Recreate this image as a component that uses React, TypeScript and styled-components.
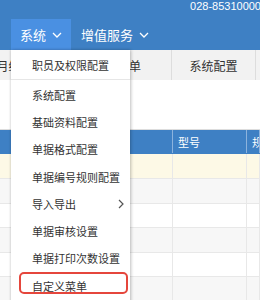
import React from "react";
import styled, { createGlobalStyle } from "styled-components";

const GlobalStyle = createGlobalStyle`
  html, body {
    margin: 0;
    padding: 0;
    width: 260px;
    height: 300px;
    overflow: hidden;
    background: #ffffff;
  }
  body {
    font-family: "Noto Sans CJK SC", "Noto Sans", sans-serif;
  }
  * { box-sizing: border-box; }
`;

const Page = styled.div`
  width: 260px;
  height: 300px;
  overflow: hidden;
  display: flex;
  flex-direction: column;
`;

const Header = styled.header`
  background: #3e80c4;
  height: 50px;
  display: flex;
  flex-direction: column;
  flex-shrink: 0;
`;

const TopStrip = styled.div`
  height: 19px;
  display: flex;
  justify-content: flex-end;
  align-items: flex-start;
  overflow: hidden;
`;

const Phone = styled.span`
  color: #ffffff;
  font-family: "Liberation Sans", Arial, sans-serif;
  font-size: 11px;
  line-height: 12px;
  white-space: nowrap;
  margin-right: -1px;
`;

const Nav = styled.nav`
  height: 31px;
  display: flex;
  align-items: stretch;
  padding-left: 11px;
  position: relative;
  z-index: 5;
`;

const NavItem = styled.div<{ $active?: boolean; $w: number; $pl: number }>`
  position: relative;
  width: ${(p) => p.$w}px;
  padding-left: ${(p) => p.$pl}px;
  display: flex;
  align-items: center;
  gap: 6px;
  color: #ffffff;
  font-size: 13px;
  white-space: nowrap;
  background: ${(p) => (p.$active ? "#4a90e2" : "transparent")};
`;

const Chevron = () => (
  <svg width="10" height="6" viewBox="0 0 10 6" style={{ flexShrink: 0, marginTop: 1 }}>
    <polyline points="1,1 5,5 9,1" fill="none" stroke="#ffffff" strokeWidth="1.3" />
  </svg>
);

const SubArrow = () => (
  <svg width="6" height="10" viewBox="0 0 6 10">
    <polyline points="1,1 5,5 1,9" fill="none" stroke="#555555" strokeWidth="1.2" />
  </svg>
);

const Menu = styled.ul`
  position: absolute;
  top: 100%;
  left: 0;
  width: 119px;
  height: 260px;
  margin: 0;
  padding: 0;
  list-style: none;
  background: #ffffff;
  box-shadow: 1px 0 3px rgba(0, 0, 0, 0.25), -1px 0 2px rgba(0, 0, 0, 0.08);
`;

const MenuItem = styled.li<{ $first?: boolean; $marked?: boolean }>`
  position: relative;
  height: ${(p) => (p.$first ? "30px" : "27.3px")};
  padding: 0 6px 0 21px;
  display: flex;
  align-items: center;
  justify-content: space-between;
  font-size: 11px;
  color: #333333;
  white-space: nowrap;
  border-bottom: ${(p) => (p.$first ? "1px solid #e6e6e6" : "none")};
  margin-bottom: ${(p) => (p.$first ? "1px" : "0")};

  &::after {
    content: "";
    display: ${(p) => (p.$marked ? "block" : "none")};
    position: absolute;
    left: 8px;
    right: 2px;
    top: 0px;
    bottom: 5px;
    border: 2px solid #e5463c;
    border-radius: 5px;
  }
`;

const TabBar = styled.div`
  height: 30px;
  background: #f2f2f2;
  display: flex;
  margin-left: -33px;
  flex-shrink: 0;
`;

const Tab = styled.div<{ $w: number }>`
  width: ${(p) => p.$w}px;
  flex-shrink: 0;
  display: flex;
  align-items: center;
  justify-content: center;
  border-right: 1px solid #dddddd;
  font-size: 12px;
  color: #333333;
  white-space: nowrap;
`;

const Toolbar = styled.div`
  height: 49px;
  background: #ffffff;
  flex-shrink: 0;
`;

const Table = styled.div`
  border-top: 1px solid #dddddd;
  display: flex;
  flex-direction: column;
`;

const Row = styled.div<{ $bg: string; $h: number; $head?: boolean }>`
  display: grid;
  grid-template-columns: 173px 74px 1fr;
  height: ${(p) => p.$h}px;
  background: ${(p) => p.$bg};
  border-bottom: 1px solid ${(p) => (p.$head ? "#3e80c4" : "#e8e8e8")};
  flex-shrink: 0;
`;

const Cell = styled.div<{ $head?: boolean }>`
  border-right: 1px solid ${(p) => (p.$head ? "#8cb3dd" : "#e8e8e8")};
  display: flex;
  align-items: center;
  padding-left: 5px;
  color: ${(p) => (p.$head ? "#ffffff" : "#333333")};
  font-size: 11px;
  white-space: nowrap;
  overflow: hidden;
`;

const menuItems = [
  "系统配置",
  "基础资料配置",
  "单据格式配置",
  "单据编号规则配置",
  "导入导出",
  "单据审核设置",
  "单据打印次数设置",
  "自定义菜单",
];

const bodyRows = [
  { bg: "#fdf9e6", h: 25 },
  { bg: "#f7f7f7", h: 25 },
  { bg: "#ffffff", h: 24 },
  { bg: "#f7f7f7", h: 25 },
  { bg: "#ffffff", h: 24 },
  { bg: "#f7f7f7", h: 25 },
];

export default function App() {
  return (
    <Page>
      <GlobalStyle />
      <Header>
        <TopStrip>
          <Phone>028-85310000</Phone>
        </TopStrip>
        <Nav>
          <NavItem $active $w={60} $pl={9}>
            系统 <Chevron />
            <Menu>
              <MenuItem $first>职员及权限配置</MenuItem>
              {menuItems.map((m) => (
                <MenuItem key={m} $marked={m === "自定义菜单"}>
                  {m}
                  {m === "导入导出" && <SubArrow />}
                </MenuItem>
              ))}
            </Menu>
          </NavItem>
          <NavItem $w={90} $pl={10}>
            增值服务 <Chevron />
          </NavItem>
        </Nav>
      </Header>
      <TabBar>
        <Tab $w={84}>月结</Tab>
        <Tab $w={121}>采购入库单</Tab>
        <Tab $w={84}>系统配置</Tab>
        <Tab $w={84}>操作日志</Tab>
      </TabBar>
      <Toolbar />
      <Table>
        <Row $bg="#3e80c4" $h={24} $head>
          <Cell $head />
          <Cell $head>型号</Cell>
          <Cell $head>规格</Cell>
        </Row>
        {bodyRows.map((r, i) => (
          <Row key={i} $bg={r.bg} $h={r.h}>
            <Cell />
            <Cell />
            <Cell />
          </Row>
        ))}
      </Table>
    </Page>
  );
}
